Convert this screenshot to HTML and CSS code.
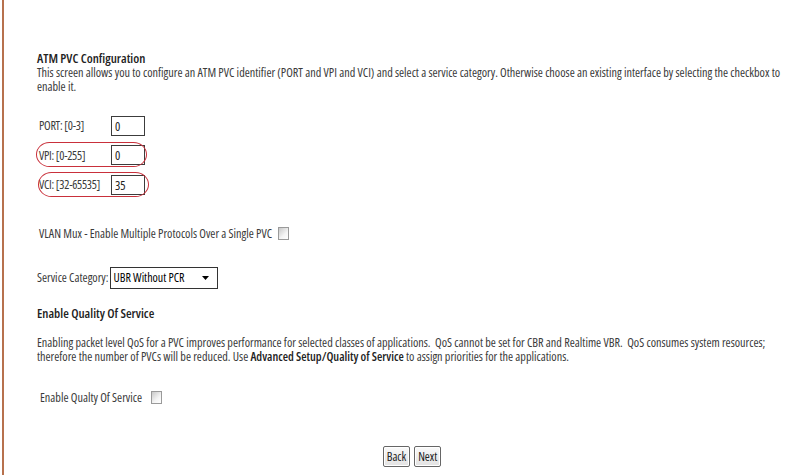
FILE: index.html
```html
<!DOCTYPE html>
<html lang="en">
<head>
    <meta charset="UTF-8">
    <title>ATM PVC Configuration</title>
    <link rel="stylesheet" href="styles.css">
</head>
<body>
    <div class="page">
        <form class="content">
            <h3 class="title">ATM PVC Configuration</h3>
            <p class="desc">This screen allows you to configure an ATM PVC identifier (PORT and VPI and VCI) and select a service category. Otherwise choose an existing interface by selecting the checkbox to enable it.</p>

            <!-- PVC identifier -->
            <div class="ids">
                <div class="row">
                    <span class="label">PORT: [0-3]</span>
                    <span class="field">0</span>
                </div>
                <div class="row">
                    <span class="label">VPI: [0-255]</span>
                    <span class="field">0</span>
                    <span class="ring ring-vpi"></span>
                </div>
                <div class="row">
                    <span class="label">VCI: [32-65535]</span>
                    <span class="field">35</span>
                    <span class="ring ring-vci"></span>
                </div>
            </div>

            <div class="vlan">
                <span>VLAN Mux - Enable Multiple Protocols Over a Single PVC</span>
                <span class="check"></span>
            </div>

            <div class="service">
                <span>Service Category:</span>
                <span class="select">UBR Without PCR
                    <svg class="arrow" viewBox="0 0 7 4"><path d="M0 0h7L3.5 4z"></path></svg>
                </span>
            </div>

            <h3 class="title qos-title">Enable Quality Of Service</h3>
            <p class="desc">Enabling packet level QoS for a PVC improves performance for selected classes of applications.&nbsp; QoS cannot be set for CBR and Realtime VBR.&nbsp; QoS consumes system resources; therefore the number of PVCs will be reduced. Use <b>Advanced Setup/Quality of Service</b> to assign priorities for the applications.</p>

            <div class="qos">
                <span>Enable Qualty Of Service</span>
                <span class="check"></span>
            </div>

            <div class="buttons">
                <span class="btn">Back</span>
                <span class="btn">Next</span>
            </div>
        </form>
    </div>
</body>
</html>
```

FILE: styles.css
```css
body {
    margin: 0;
    background: #ffffff;
    color: #3a3a3a;
    font-family: "Open Sans", sans-serif;
    font-stretch: 75%;
    font-size: 12.2px;
}

.page {
    margin-left: 2px;
    border-left: 2px solid #b7714d;
    min-height: 475px;
}

.content {
    padding: 51px 0 0 33px;
    width: 754px;
}

.title {
    margin: 0;
    font-size: 12.9px;
    font-weight: 600;
    color: #222;
    line-height: 14px;
}

.desc {
    margin: 1px 0 0 0;
    line-height: 14px;
}

.desc b {
    font-weight: 600;
    color: #222;
}

/* port / vpi / vci */
.ids {
    margin-top: 17px;
    padding-left: 2px;
}

.row {
    position: relative;
    display: flex;
    align-items: center;
    height: 29.5px;
}

.label {
    min-width: 72px;
    white-space: nowrap;
    letter-spacing: -0.3px;
}

.field {
    box-sizing: border-box;
    width: 34px;
    height: 20px;
    border: 1px solid #3c3c3c;
    padding: 1px 0 0 3px;
    font-size: 12.5px;
    color: #222;
}

.ring {
    position: absolute;
    border: 1.5px solid #c9303b;
    border-radius: 14px / 13px;
    height: 23px;
}

.ring-vpi {
    left: -3px;
    top: 1.5px;
    width: 109px;
}

.ring-vci {
    left: -1px;
    top: 1.5px;
    width: 109px;
}

.vlan {
    display: flex;
    align-items: center;
    gap: 6px;
    margin-top: 25px;
    padding-left: 2px;
}

.check {
    box-sizing: border-box;
    width: 11px;
    height: 13px;
    border: 1px solid #9a9a9a;
    background: linear-gradient(135deg, #c8c8c8, #f4f4f4 60%, #ffffff);
}

.service {
    display: flex;
    align-items: center;
    margin-top: 25px;
    height: 22px;
}

.select {
    position: relative;
    box-sizing: border-box;
    display: flex;
    align-items: center;
    width: 108px;
    height: 22px;
    margin-left: 1px;
    border: 1px solid #333;
    padding-left: 3px;
    font-size: 12px;
    color: #000;
}

.arrow {
    position: absolute;
    right: 8px;
    top: 8px;
    width: 7px;
    height: 4px;
    fill: #000;
}

.qos-title {
    margin-top: 17px;
}

.qos-title + .desc {
    margin-top: 16px;
}

.qos {
    display: flex;
    align-items: center;
    gap: 9px;
    margin-top: 25px;
    padding-left: 3px;
}

.buttons {
    display: flex;
    justify-content: center;
    gap: 4px;
    margin-top: 40px;
    padding-right: 4px;
}

.btn {
    border: 1px solid #666;
    border-radius: 2px;
    background: linear-gradient(#fafafa, #e2e2e2);
    padding: 1px 3px;
    font-size: 12px;
    color: #222;
    box-shadow: inset 0 0 0 1px #fff;
}
```
